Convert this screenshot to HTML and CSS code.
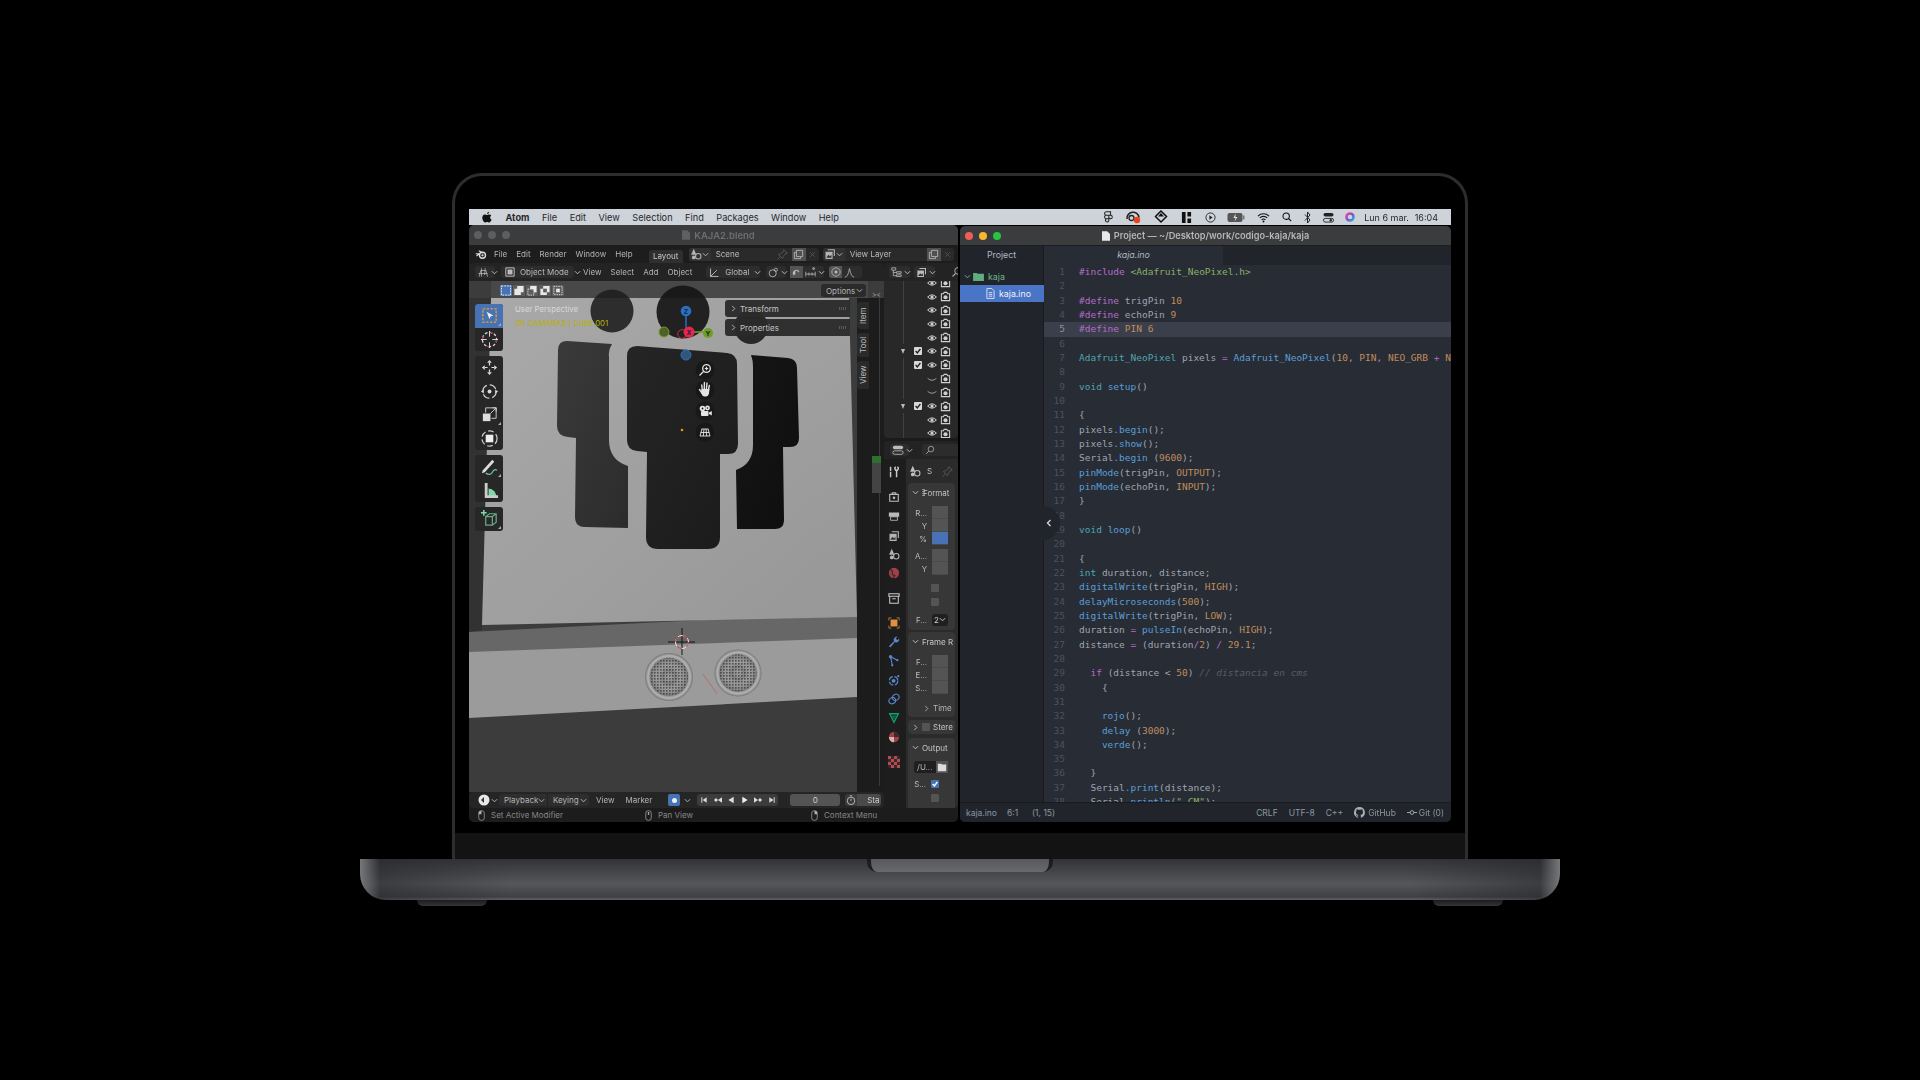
FILE: index.html
```html
<!DOCTYPE html>
<html lang="en">
<head>
  <meta charset="UTF-8" />
  <title>Atom and Blender on a MacBook Pro</title>
  <link rel="stylesheet" href="styles.css">
</head>
<body>
  <svg class="sprite" width="0" height="0">
    <symbol id="eye" viewBox="0 0 16 16"><path d="M1 8q7-7 14 0q-7 7-14 0z" fill="none" stroke="currentColor" stroke-width="1.6"/><circle cx="8" cy="8" r="2.6" fill="currentColor"/></symbol>
    <symbol id="eye-off" viewBox="0 0 16 16"><path d="M1 7q7 6 14 0" fill="none" stroke="currentColor" stroke-width="1.1"/></symbol>
    <symbol id="cam" viewBox="0 0 16 16"><path d="M2 4h3l1-2h4l1 2h3v10H2z" fill="none" stroke="currentColor" stroke-width="1.5"/><circle cx="8" cy="9" r="3" fill="currentColor"/></symbol>
    <symbol id="chev" viewBox="0 0 8 8"><path d="M1 2.5l3 3 3-3" fill="none" stroke="currentColor" stroke-width="1.1"/></symbol>
    <symbol id="right" viewBox="0 0 8 8"><path d="M2.5 1l3 3-3 3" fill="none" stroke="currentColor" stroke-width="1"/></symbol>
    <symbol id="tick" viewBox="0 0 10 10"><path d="M2 5l2.2 2.4L8 2.4" fill="none" stroke="currentColor" stroke-width="1.8"/></symbol>
    <symbol id="search" viewBox="0 0 16 16"><circle cx="9.5" cy="6.5" r="4.5" fill="none" stroke="currentColor" stroke-width="1.3"/><path d="M6 10l-4 4" stroke="currentColor" stroke-width="1.5"/></symbol>
    <symbol id="copy" viewBox="0 0 16 16"><path d="M5 2h9v9h-3v3H2V5h3zM5 5v6h6" fill="none" stroke="currentColor" stroke-width="1.3"/></symbol>
    <symbol id="close" viewBox="0 0 10 10"><path d="M1.5 1.5l7 7m0-7l-7 7" stroke="currentColor" stroke-width="1"/></symbol>
    <symbol id="scene" viewBox="0 0 16 16"><path d="M5 1L1.5 9h7z" fill="currentColor"/><circle cx="11" cy="11" r="3.6" fill="none" stroke="currentColor" stroke-width="1.4"/><circle cx="5" cy="12.5" r="2.5" fill="currentColor"/></symbol>
    <symbol id="layer" viewBox="0 0 16 16"><path d="M5 1.5h9.5v9H13V3H5zM2 5h9.500v9.500H2z" fill="currentColor"/><path d="M3 13l3-4 2 2 2-2v4z" fill="#333"/></symbol>
    <symbol id="mouse-l" viewBox="0 0 10 16"><rect x="1" y="1" width="8" height="14" rx="3.5" fill="none" stroke="currentColor"/><path d="M1 6V4.5A3.5 3.5 0 0 1 4.5 1H5v5z" fill="currentColor"/></symbol>
    <symbol id="mouse-m" viewBox="0 0 10 16"><rect x="1" y="1" width="8" height="14" rx="3.5" fill="none" stroke="currentColor"/><rect x="4" y="3" width="2" height="4" fill="currentColor"/></symbol>
    <symbol id="mouse-r" viewBox="0 0 10 16"><rect x="1" y="1" width="8" height="14" rx="3.5" fill="none" stroke="currentColor"/><path d="M9 6V4.5A3.5 3.5 0 0 0 5.5 1H5v5z" fill="currentColor"/></symbol>
  </svg>

  <div class="laptop">
    <div class="lid">
      <div class="screen">
        <div class="menubar">
          <svg class="apple" viewBox="0 0 14 16"><path d="M10 .5c.1 1.700-1.500 3.200-3 3C6.900 2 8.500.6 10 .5zM3.800 4.400c1.300 0 2.200.8 3.100.8s1.800-.9 3.300-.8c1 0 2.100.5 2.800 1.500-2.400 1.500-2 4.700.4 5.800-.6 1.700-2.100 3.900-3.500 3.900-1.100 0-1.500-.7-2.800-.7s-1.700.7-2.800.7C2.400 15.600.4 12 .4 9.200c0-3 1.600-4.800 3.400-4.800z" fill="#111"/></svg>
          <span class="menu-app">Atom</span>
          <span>File</span><span>Edit</span><span>View</span><span>Selection</span><span>Find</span><span>Packages</span><span>Window</span><span>Help</span>
          <div class="tray">
            <svg class="w10" viewBox="0 0 10 14"><path d="M3 1h5v4H3a2 2 0 0 1 0-4zM3 5h3v4H3a2 2 0 0 1 0-4zM3 9h3v2a2 2 0 1 1-3-2zM6 5h2a2 2 0 1 1-2 2z" fill="none" stroke="#222" stroke-width="1.2"/></svg>
            <svg class="w16" viewBox="0 0 16 14"><path d="M1.500 9a6 6 0 0 1 12-1.500" fill="none" stroke="#222" stroke-width="1.6"/><circle cx="6" cy="8" r="2.5" fill="none" stroke="#222" stroke-width="1.3"/><circle cx="11.500" cy="10" r="3.200" fill="#e8431f"/></svg>
            <svg class="w14" viewBox="0 0 14 14"><path d="M7 1l5.500 5.500L7 12 1.500 6.500z" fill="none" stroke="#111" stroke-width="1.5"/><path d="M7 3l3 3.500H4z" fill="#111"/></svg>
            <svg class="w12" viewBox="0 0 12 12"><path d="M1 0h4v12H1zM7 0h4v5H7zM7 7h4v5H7z" fill="#111"/></svg>
            <svg class="w11" viewBox="0 0 12 12"><circle cx="6" cy="6" r="5" fill="none" stroke="#222"/><path d="M4.800 3.500l3.500 2.500-3.500 2.500z" fill="#222"/></svg>
            <svg class="w18" viewBox="0 0 18 10"><rect x=".5" y=".5" width="15" height="9" rx="2" fill="#555"/><rect x="16" y="3" width="1.5" height="4" fill="#777"/><path d="M8.500 1L6.500 5.500h2L7.500 9l3-4.500h-2z" fill="#ddd"/></svg>
            <svg class="w12" viewBox="0 0 14 11"><path d="M1 4a8.500 8.500 0 0 1 12 0M3 6a5.500 5.500 0 0 1 8 0M5 8a2.800 2.800 0 0 1 4 0" fill="none" stroke="#111" stroke-width="1.2"/><circle cx="7" cy="9.800" r="1" fill="#111"/></svg>
            <svg class="w10" viewBox="0 0 12 12"><circle cx="5" cy="5" r="3.800" fill="none" stroke="#111" stroke-width="1.3"/><path d="M8 8l3 3" stroke="#111" stroke-width="1.5"/></svg>
            <svg class="w7" viewBox="0 0 7 13"><path d="M1 3.500l5 5.500-2.500 3V1L6 4 1 9.500" fill="none" stroke="#222"/></svg>
            <svg class="w11" viewBox="0 0 12 12"><rect x=".5" y="1" width="11" height="4" rx="2" fill="#222"/><rect x=".5" y="7" width="11" height="4" rx="2" fill="none" stroke="#222"/><circle cx="8.500" cy="9" r="1.300" fill="#222"/></svg>
            <svg class="w10" viewBox="0 0 12 12"><defs><linearGradient id="siri" x1="0" y1="0" x2="1" y2="1"><stop offset="0" stop-color="#e84a9c"/><stop offset=".5" stop-color="#7a4fd8"/><stop offset="1" stop-color="#28b6c8"/></linearGradient></defs><circle cx="6" cy="6" r="4.300" fill="none" stroke="url(#siri)" stroke-width="3"/></svg>
            <span class="clock">Lun 6 mar.</span><span>16:04</span>
          </div>
        </div>

        <div class="desktop">
          <div class="blender">
            <div class="win-title">
              <div class="lights">
                <i class="light off"></i><i class="light off"></i><i class="light off"></i>
              </div>
              <span class="blend-name"><svg class="doc" viewBox="0 0 10 12"><path d="M0 0h6.500L10 3.500V12H0z" fill="#5e6062"/></svg>KAJA2.blend</span>
            </div>
            <div class="topbar">
              <svg class="logo" viewBox="0 0 16 14"><path d="M1 6h5l-4 3M5 2l6 3" fill="none" stroke="#ddd" stroke-width="1.500"/><circle cx="10" cy="8" r="4" fill="none" stroke="#ddd" stroke-width="1.800"/><circle cx="10" cy="8" r="1.500" fill="#ddd"/></svg>
              <span>File</span><span>Edit</span><span>Render</span><span>Window</span><span>Help</span>
              <span class="tab-layout">Layout</span>
              <div class="top-field scene-field">
                <span class="ficon"><svg class="ic12"><use href="#scene"/></svg><svg class="ic6"><use href="#chev"/></svg></span>
                <span class="fname">Scene</span>
                <svg class="ic11 dim" viewBox="0 0 16 16"><path d="M10 1l5 5-3 1-3 4-1 3-6-6 3-1 4-3zM5 11l-4 4" fill="none" stroke="currentColor" stroke-width="1.200"/></svg>
                <span class="copybox"><svg class="ic11"><use href="#copy"/></svg></span>
                <svg class="ic7 dim"><use href="#close"/></svg>
              </div>
              <div class="top-field layer-field">
                <span class="ficon"><svg class="ic12"><use href="#layer"/></svg><svg class="ic6"><use href="#chev"/></svg></span>
                <span class="fname">View Layer</span>
                <span class="copybox"><svg class="ic11"><use href="#copy"/></svg></span>
                <svg class="ic7 dim"><use href="#close"/></svg>
              </div>
            </div>

            <div class="blender-main">
              <div class="blender-left">
                <div class="view-header">
                  <span class="hbtn editor-btn">
                    <svg class="ic12" viewBox="0 0 16 16"><path d="M2 10h12M6 3v11M11 3l-1 9M3 14l2-8h7l2 8" fill="none" stroke="currentColor"/></svg><svg class="ic6"><use href="#chev"/></svg>
                  </span>
                  <span class="hbtn mode-btn">
                    <svg class="ic10" viewBox="0 0 12 12"><path d="M1 1h10v10H1z" fill="none" stroke="currentColor" stroke-width="1.200"/><rect x="3" y="3" width="6" height="6" fill="currentColor"/></svg>Object Mode<svg class="ic6"><use href="#chev"/></svg>
                  </span>
                  <span class="hmenu menu-view">View</span><span class="hmenu">Select</span><span class="hmenu">Add</span><span class="hmenu">Object</span>
                  <span class="hbtn global-btn">
                    <svg class="ic11" viewBox="0 0 14 14"><path d="M2 2v10h10M2 12l8-8" fill="none" stroke="currentColor" stroke-width="1.200"/></svg>Global<svg class="ic6"><use href="#chev"/></svg>
                  </span>
                  <span class="hbtn pivot-btn">
                    <svg class="ic11" viewBox="0 0 14 14"><circle cx="6" cy="8" r="4.500" fill="none" stroke="currentColor" stroke-width="1.100"/><circle cx="10" cy="3.500" r="2" fill="none" stroke="currentColor"/></svg><svg class="ic6"><use href="#chev"/></svg>
                  </span>
                  <span class="hbtn snap-btn">
                    <svg class="ic11 magnet" viewBox="0 0 14 14"><path d="M3 12A5 5 0 1 1 11 6l-2 2A2 2 0 1 0 6 9z" fill="currentColor"/></svg>
                    <svg class="ic11" viewBox="0 0 14 14"><path d="M1 6v6M13 6v6M1 9h12M5 7v4M9 7v4M10 1h2v2h-2z" fill="none" stroke="currentColor"/></svg><svg class="ic6"><use href="#chev"/></svg>
                  </span>
                  <span class="hbtn prop-btn">
                    <span class="prop-on"><svg class="ic10" viewBox="0 0 12 12"><circle cx="6" cy="6" r="5" fill="none" stroke="currentColor"/><circle cx="6" cy="6" r="1.800" fill="currentColor"/></svg></span>
                    <svg class="ic11" viewBox="0 0 14 14"><path d="M1 13Q5 13 7 2Q9 13 13 13" fill="none" stroke="currentColor"/></svg>
                  </span>
                </div>

                <div class="viewport">
                  <svg class="scene" viewBox="469 281 415 511">
                    <defs>
                      <linearGradient id="plane" x1="0" y1="0" x2="1" y2="1"><stop offset="0" stop-color="#a9a9a9"/><stop offset="1" stop-color="#979797"/></linearGradient>
                      <linearGradient id="pieceL" x1="0" y1="0" x2="1" y2="1"><stop offset="0" stop-color="#3a3a3a"/><stop offset="1" stop-color="#2c2c2c"/></linearGradient>
                      <linearGradient id="pieceC" x1="0" y1="0" x2="1" y2="1"><stop offset="0" stop-color="#252525"/><stop offset="1" stop-color="#1b1b1b"/></linearGradient>
                      <linearGradient id="pieceR" x1="0" y1="0" x2="1" y2="1"><stop offset="0" stop-color="#161616"/><stop offset="1" stop-color="#0e0e0e"/></linearGradient>
                      <radialGradient id="ring"><stop offset=".78" stop-color="#8a8a8a"/><stop offset=".88" stop-color="#b4b4b4"/><stop offset="1" stop-color="#747474"/></radialGradient>
                      <radialGradient id="cone"><stop offset="0" stop-color="#b0b0b0" stop-opacity=".1"/><stop offset=".35" stop-color="#3a3a3a" stop-opacity=".25"/><stop offset=".6" stop-color="#9a9a9a" stop-opacity=".1"/><stop offset="1" stop-color="#333" stop-opacity=".35"/></radialGradient>
                      <pattern id="mesh" width="3" height="3" patternUnits="userSpaceOnUse"><rect width="3" height="3" fill="#9c9c9c"/><rect width="1.600" height="1.600" fill="#484848"/></pattern>
                    </defs>
                    <rect x="469" y="281" width="415" height="511" fill="#3c3c3c"/>
                    <path d="M469 298h22l-9 332-13 2z" fill="#323232"/>
                    <path d="M469 632l388-20v28l-388 15z" fill="#676767"/>
                    <path d="M491 298h358l8 319-375 8z" fill="url(#plane)"/>
                    <path d="M469 652l388-14v59l-388 21z" fill="#9b9b9b"/>
                    <path d="M857 298h27v494h-27z" fill="#1c1c1c"/>
                    <path d="M879 298h1v488h-1z" fill="#3a3a3a"/>
                    <path d="M872 456h9v7h-9z" fill="#2f6f2f"/>
                    <path d="M872 463h9v30h-9z" fill="#444"/>
                    <rect x="491" y="281" width="366" height="17" fill="#484848"/>
                    <rect x="857" y="281" width="11" height="17" fill="#484848"/>

                    <path d="M567 341L612 344Q608 350 609 357L609 440Q609 460 628 466L628 528L585 527Q575 527 575 517L576 438L568 437Q557 436 557 426L558 350Q558 341 567 341Z" fill="url(#pieceL)"/>
                    <path d="M637 346L727 353Q737 354 737 364L738 444Q738 454 728 454L720 454L720 537Q720 549 708 549L658 549Q646 549 646 537L647 452L637 451Q627 450 627 440L627 356Q627 346 637 346Z" fill="url(#pieceC)"/>
                    <path d="M751 355L788 358Q797 359 797 368L799 438Q799 447 790 447L783 447L784 520Q784 529 775 529L737 529L736 470Q753 464 753 445L753 367Q753 360 751 355Z" fill="url(#pieceR)"/>

                    <circle cx="612" cy="311" r="21.500" fill="#1d1d1d" fill-opacity=".88"/>
                    <circle cx="683" cy="312" r="26.500" fill="#161616" fill-opacity=".92"/>
                    <circle cx="751" cy="327" r="17" fill="#1d1d1d" fill-opacity=".92"/>

                    <path d="M686 311v22" stroke="#2a6fc0" stroke-width="1.500"/>
                    <path d="M689 332h19" stroke="#6f9d1f" stroke-width="1.500"/>
                    <circle cx="664" cy="332" r="5" fill="#50602a" stroke="#6f9d1f"/>
                    <circle cx="682" cy="334" r="4.300" fill="none" stroke="#c0303f"/>
                    <circle cx="686" cy="311" r="5.300" fill="#2a6fc0"/>
                    <circle cx="708" cy="333" r="5" fill="#6f9d1f"/>
                    <circle cx="689" cy="332" r="5.500" fill="#e8244f"/>
                    <circle cx="686" cy="355" r="5" fill="#33557a" stroke="#2a6fc0"/>
                    <text class="axis" x="686" y="313.500">Z</text><text class="axis" x="689" y="334.500">X</text><text class="axis" x="708" y="335.500">Y</text>

                    <g fill="#181818" fill-opacity=".95">
                      <circle cx="705" cy="370" r="9.500"/><circle cx="705" cy="390" r="9.500"/><circle cx="705" cy="411" r="9.500"/><circle cx="705" cy="432" r="9.500"/>
                    </g>
                    <g fill="none" stroke="#e4e4e4">
                      <circle cx="706.500" cy="368.500" r="3.800" stroke-width="1.300"/>
                      <path d="M703.500 371.500l-4 4M704.800 368.500h3.400M706.500 366.800v3.400" stroke-width="1.200"/>
                      <path d="M702.300 391l-.5-6M704.300 389l.1-6.500M706.400 389l.6-6M708.400 390l.9-4.500M702 393l-2.500-3.500" stroke-width="1.400" stroke-linecap="round"/>
                      <path d="M702 429l-2 7M708 429l2 7M704 429l-.7 7M706 429l.7 7M701.500 429h7M700.700 432.500h8.600M700 436h10" stroke-width=".9"/>
                    </g>
                    <path d="M701.500 389h8l-.6 5q-1 2.500-3 2.500h-1.500q-2 0-3-3z" fill="#e4e4e4"/>
                    <g fill="#e4e4e4">
                      <circle cx="702.500" cy="408.500" r="2.800"/><circle cx="707.500" cy="408" r="2.400"/>
                      <rect x="701" y="411" width="7.500" height="5" rx="1"/>
                      <path d="M709 412.500l2.800-1.500v4.500l-2.800-1.500z"/>
                    </g>
                    <circle cx="702.500" cy="408.500" r=".9" fill="#181818"/><circle cx="707.500" cy="408" r=".8" fill="#181818"/>
                    <circle cx="682" cy="430" r="1.300" fill="#f09020"/>

                    <circle cx="669" cy="677" r="24" fill="url(#ring)"/><circle cx="669" cy="677" r="19" fill="url(#mesh)"/><circle cx="669" cy="677" r="19" fill="url(#cone)"/>
                    <circle cx="738" cy="673" r="23.500" fill="url(#ring)"/><circle cx="738" cy="673" r="18.500" fill="url(#mesh)"/><circle cx="738" cy="673" r="18.500" fill="url(#cone)"/>
                    <path d="M703 674l14 20" stroke="#bb6a6a"/>
                    <path d="M682 628v27M668 642h27" stroke="#151515"/>
                    <circle cx="682" cy="642" r="6.500" fill="none" stroke="#eee"/>
                    <circle cx="682" cy="642" r="6.500" fill="none" stroke="#d02020" stroke-dasharray="5.100 5.100"/>
                  </svg>

                  <div class="select-modes">
                    <span class="sel-mode on"><svg viewBox="0 0 12 12"><rect x="1" y="1" width="10" height="10" fill="none" stroke="#f0f0f0" stroke-dasharray="2 1"/></svg></span>
                    <span class="sel-mode"><svg viewBox="0 0 12 12"><path d="M4 1h7v7H8v3H1V4h3z" fill="#e8e8e8"/></svg></span>
                    <span class="sel-mode"><svg viewBox="0 0 12 12"><path d="M4 1h7v7H4z" fill="#e8e8e8"/><rect x="1.500" y="4.500" width="6.500" height="6.500" fill="#5c5c5c" stroke="#e8e8e8" stroke-dasharray="1.500 1"/></svg></span>
                    <span class="sel-mode"><svg viewBox="0 0 12 12"><path d="M4 1h7v7H8V4H4zM1 4h7v7H1z" fill="#e8e8e8"/><rect x="4" y="4" width="4" height="4" fill="#5c5c5c"/></svg></span>
                    <span class="sel-mode"><svg viewBox="0 0 12 12"><rect x="1.500" y="1.500" width="9" height="9" fill="none" stroke="#ddd" stroke-dasharray="1.500 1"/><rect x="4" y="4" width="4" height="4" fill="#e8e8e8"/></svg></span>
                  </div>
                  <span class="options-btn">Options<svg class="ic6"><use href="#chev"/></svg></span>

                  <div class="view-label">
                    <span>User Perspective</span>
                    <span class="view-object">(0) CAMARAS | Cube.001</span>
                  </div>

                  <div class="tool-shelf">
                    <div class="tool-group">
                      <span class="tool active"><svg viewBox="0 0 20 20"><rect x="3" y="3" width="14" height="14" fill="none" stroke="#e0a040" stroke-width="1.400" stroke-dasharray="2.500 1.500"/><path d="M7 6l7 4-3 1-1 3z" fill="#eee"/></svg></span>
                      <span class="tool"><svg viewBox="0 0 20 20"><circle cx="10" cy="10" r="7.500" fill="none" stroke="#d8d8d8" stroke-width="1.300" stroke-dasharray="3 2"/><circle cx="10" cy="10" r="7.500" fill="none" stroke="#c03040" stroke-width="1.300" stroke-dasharray="3 9"/><path d="M10 1v6M10 13v6M1 10h6M13 10h6" stroke="#ddd"/></svg></span>
                    </div>
                    <div class="tool-group">
                      <span class="tool"><svg viewBox="0 0 20 20"><path d="M10 2l2.500 3h-5zM10 18l2.500-3h-5zM2 10l3-2.500v5zM18 10l-3-2.500v5z" fill="#ddd"/><path d="M10 5v3M10 12v3M5 10h3M12 10h3" stroke="#ddd" stroke-width="1.300"/></svg></span>
                      <span class="tool"><svg viewBox="0 0 20 20"><circle cx="10" cy="10" r="7" fill="none" stroke="#ccc" stroke-width="1.300" stroke-dasharray="8 3"/><circle cx="10" cy="10" r="2" fill="#ddd"/><path d="M1 10l3-2v4zM19 10l-3-2v4z" fill="#ddd"/></svg></span>
                      <span class="tool tool-corner"><svg viewBox="0 0 20 20"><rect x="3" y="9" width="8" height="8" fill="#ddd"/><path d="M6 8V3h11v11h-5M11 9l6-6M13 3h4v4" fill="none" stroke="#ccc"/></svg></span>
                      <span class="tool"><svg viewBox="0 0 20 20"><circle cx="10" cy="10" r="8" fill="none" stroke="#ccc" stroke-width="1.300" stroke-dasharray="6 3"/><rect x="6" y="6" width="8" height="8" fill="#eee"/></svg></span>
                    </div>
                    <div class="tool-group">
                      <span class="tool tool-corner"><svg viewBox="0 0 20 20"><path d="M3 14L13 3l2 2L5 16l-3 1z" fill="#ddd"/><path d="M6 17q5 3 7-1t5-2" fill="none" stroke="#68c098" stroke-width="1.300"/></svg></span>
                      <span class="tool"><svg viewBox="0 0 20 20"><path d="M9 17V8a8 8 0 0 1 8 9z" fill="#7fd8a8"/><path d="M5 2h3v13h11v3H5z" fill="#ccc"/></svg></span>
                    </div>
                    <div class="tool-group">
                      <span class="tool tool-corner"><svg viewBox="0 0 20 20"><path d="M6 8l4-3h7v9l-4 3H6zM6 8h7v9M13 8l4-3" fill="none" stroke="#68a888" stroke-width="1.300"/><path d="M1 4h6M4 1v6" stroke="#7fd8a8" stroke-width="1.600"/></svg></span>
                    </div>
                  </div>

                  <div class="n-panel panel-transform"><svg class="ic6"><use href="#right"/></svg>Transform<i class="grip"></i></div>
                  <div class="n-panel panel-properties"><svg class="ic6"><use href="#right"/></svg>Properties<i class="grip"></i></div>

                  <span class="n-tab tab-item">Item</span>
                  <span class="n-tab tab-tool">Tool</span>
                  <span class="n-tab tab-view">View</span>
                  <span class="split-arrows">&gt;&lt;</span>
                </div>

                <div class="timeline">
                  <span class="tl-editor"><svg class="ic12" viewBox="0 0 12 12"><circle cx="6" cy="6" r="5.500" fill="#e8e8e8"/><path d="M6 3L3 6l3 3z" fill="#333"/></svg><svg class="ic6"><use href="#chev"/></svg></span>
                  <span class="tl-btn tl-play">Playback<svg class="ic6"><use href="#chev"/></svg></span>
                  <span class="tl-btn tl-key">Keying<svg class="ic6"><use href="#chev"/></svg></span>
                  <span class="tl-menu">View</span>
                  <span class="tl-menu">Marker</span>
                  <span class="tl-record"><i></i></span>
                  <svg class="ic6 tl-recchev"><use href="#chev"/></svg>
                  <div class="tl-transport">
                    <svg viewBox="0 0 12 12"><path d="M2 2h1.500v8H2zM10 2v8L4 6z" fill="#ddd"/></svg>
                    <svg viewBox="0 0 12 12"><path d="M0 6l3-3 3 3-3 3zM6 6l6-4v8z" fill="#ddd"/></svg>
                    <svg viewBox="0 0 12 12"><path d="M10 1v10L2 6z" fill="#ddd"/></svg>
                    <svg viewBox="0 0 12 12"><path d="M2 1v10l8-5z" fill="#eee"/></svg>
                    <svg viewBox="0 0 12 12"><path d="M12 6L9 3 6 6l3 3zM6 6L0 2v8z" fill="#ddd"/></svg>
                    <svg viewBox="0 0 12 12"><path d="M10 2H8.500v8H10zM2 2v8l6-4z" fill="#ddd"/></svg>
                  </div>
                  <span class="tl-frame">0</span>
                  <span class="tl-timer"><svg class="ic10" viewBox="0 0 12 12"><circle cx="6" cy="7" r="4.500" fill="none" stroke="#ccc"/><path d="M6 7V4.500M4.500 1h3" stroke="#ccc"/></svg></span>
                  <span class="tl-start">Sta</span>
                </div>
              </div>

              <div class="blender-right">
                <div class="outliner">
                  <div class="out-header">
                    <span class="hbtn"><svg class="ic11" viewBox="0 0 14 14"><path d="M1 1h5v3H1zM7 6h6v2H7zM7 10h6v2H7zM3 4v7h4M3 7h4" fill="none" stroke="currentColor"/></svg><svg class="ic6"><use href="#chev"/></svg></span>
                    <span class="hbtn"><svg class="ic11"><use href="#layer"/></svg><svg class="ic6"><use href="#chev"/></svg></span>
                    <svg class="ic12 out-search"><use href="#search"/></svg>
                  </div>
                  <div class="out-rows">
                    <div class="orow stem"><svg><use href="#eye"/></svg><svg><use href="#cam"/></svg></div>
                    <div class="orow stem"><svg><use href="#eye"/></svg><svg><use href="#cam"/></svg></div>
                    <div class="orow stem"><svg><use href="#eye"/></svg><svg><use href="#cam"/></svg></div>
                    <div class="orow stem"><svg><use href="#eye"/></svg><svg><use href="#cam"/></svg></div>
                    <div class="orow stem"><svg><use href="#eye"/></svg><svg><use href="#cam"/></svg></div>
                    <div class="orow"><b class="tri"></b><i class="check"><svg><use href="#tick"/></svg></i><svg><use href="#eye"/></svg><svg><use href="#cam"/></svg></div>
                    <div class="orow stem"><i class="check"><svg><use href="#tick"/></svg></i><svg><use href="#eye"/></svg><svg><use href="#cam"/></svg></div>
                    <div class="orow stem"><svg><use href="#eye-off"/></svg><svg><use href="#cam"/></svg></div>
                    <div class="orow stem"><svg><use href="#eye-off"/></svg><svg><use href="#cam"/></svg></div>
                    <div class="orow"><b class="tri"></b><i class="check"><svg><use href="#tick"/></svg></i><svg><use href="#eye"/></svg><svg><use href="#cam"/></svg></div>
                    <div class="orow stem"><svg><use href="#eye"/></svg><svg><use href="#cam"/></svg></div>
                    <div class="orow stem"><svg><use href="#eye"/></svg><svg><use href="#cam"/></svg></div>
                  </div>
                </div>

                <div class="properties">
                  <div class="prop-header">
                    <span class="hbtn"><svg class="ic12" viewBox="0 0 14 14"><rect x="1" y="2" width="12" height="4" rx="2" fill="currentColor"/><rect x="1" y="8" width="12" height="4" rx="2" fill="none" stroke="currentColor"/></svg><svg class="ic6"><use href="#chev"/></svg></span>
                    <span class="prop-search"><svg class="ic10"><use href="#search"/></svg></span>
                  </div>
                  <div class="prop-body">
                    <div class="prop-tabs">
                      <svg class="g-tool" viewBox="0 0 14 14"><path d="M3 1v5M3 7v6M9 1q-2 2 0 4h2q2-2 0-4M10 5v8" fill="none" stroke="#ccc" stroke-width="1.700"/></svg>
                      <svg class="g-render" viewBox="0 0 14 14"><path d="M2 4h10v8H2zM5 4V2h4v2" fill="none" stroke="#bbb" stroke-width="1.300"/><circle cx="7" cy="8" r="1.500" fill="#bbb"/></svg>
                      <svg class="g-output" viewBox="0 0 14 14"><path d="M1 3h12v5H1z" fill="#bbb"/><path d="M3 8h8v4H3z" fill="none" stroke="#bbb"/></svg>
                      <svg class="g-layer"><use href="#layer"/></svg>
                      <svg class="g-scene"><use href="#scene"/></svg>
                      <svg class="g-world" viewBox="0 0 14 14"><circle cx="7" cy="7" r="6" fill="#a04048"/><path d="M3 3q3 2 2 4t3 3l-2 3" fill="none" stroke="#3a2a2a" stroke-width="1.400"/></svg>
                      <svg class="g-coll" viewBox="0 0 14 14"><path d="M1 2h12v3H1zM2 5h10v8H2zM5 8h4" fill="none" stroke="#ccc" stroke-width="1.200"/></svg>
                      <svg class="g-obj" viewBox="0 0 14 14"><path d="M1 4V1h3M10 1h3v3M13 10v3h-3M4 13H1v-3" fill="none" stroke="#c08040"/><rect x="3" y="3" width="8" height="8" fill="#e09040"/></svg>
                      <svg class="g-mod" viewBox="0 0 14 14"><path d="M1 12l6-6a3.500 3.500 0 0 1 4-5l-2 2 2 2 2-2a3.500 3.500 0 0 1-5 4l-5 6z" fill="#5a86d0"/></svg>
                      <svg class="g-part" viewBox="0 0 14 14"><path d="M3 2l8 4M3 2l2 10" stroke="#5a86d0" stroke-width="1.300"/><circle cx="3" cy="2" r="2" fill="#5a86d0"/><circle cx="11" cy="6" r="1.300" fill="#5a86d0"/><circle cx="5" cy="12" r="1.300" fill="#5a86d0"/></svg>
                      <svg class="g-phys" viewBox="0 0 14 14"><circle cx="6.500" cy="8" r="5" fill="none" stroke="#5a86d0" stroke-width="1.300" stroke-dasharray="6 2"/><circle cx="6.500" cy="8" r="2.200" fill="#5a86d0"/><circle cx="12" cy="2.500" r="1.300" fill="#5a86d0"/></svg>
                      <svg class="g-cons" viewBox="0 0 14 14"><ellipse cx="5" cy="9" rx="4" ry="3.500" fill="none" stroke="#5a86d0" stroke-width="1.300" transform="rotate(-30 5 9)"/><ellipse cx="9" cy="5" rx="4" ry="3.500" fill="none" stroke="#5a86d0" stroke-width="1.300" transform="rotate(-30 9 5)"/></svg>
                      <svg class="g-data" viewBox="0 0 14 14"><path d="M2 2h10L7 12z" fill="none" stroke="#10a070" stroke-width="1.600"/><path d="M4 4h6l-3 5z" fill="#0c6a4c"/></svg>
                      <svg class="g-mat" viewBox="0 0 14 14"><circle cx="7" cy="7" r="6" fill="#a04048"/><path d="M7 1a6 6 0 0 1 6 6H7z" fill="#3a2a2a"/><path d="M1 7h6v6a6 6 0 0 1-6-6z" fill="#d8b0b0"/></svg>
                      <svg class="g-tex" viewBox="0 0 12 12"><rect width="12" height="12" fill="#33282a"/><path d="M0 0h3v3H0zM6 0h3v3H6zM3 3h3v3H3zM9 3h3v3H9zM0 6h3v3H0zM6 6h3v3H6zM3 9h3v3H3zM9 9h3v3H9z" fill="#b84a52"/></svg>
                    </div>
                    <div class="prop-content">
                      <div class="prop-context">
                        <svg class="ic12"><use href="#scene"/></svg><span>S</span>
                        <svg class="ic11 dim" viewBox="0 0 16 16"><path d="M10 1l5 5-3 1-3 4-1 3-6-6 3-1 4-3zM5 11l-4 4" fill="none" stroke="currentColor" stroke-width="1.200"/></svg>
                      </div>

                      <section class="panel panel-format">
                        <div class="panel-head"><svg class="ic6"><use href="#chev"/></svg><i class="grip-v"></i>Format</div>
                        <div class="frow"><label>R...</label><i class="field"></i></div>
                        <div class="frow"><label>Y</label><i class="field"></i></div>
                        <div class="frow"><label>%</label><i class="field blue"></i></div>
                        <div class="frow spaced"><label>A...</label><i class="field"></i></div>
                        <div class="frow"><label>Y</label><i class="field"></i></div>
                        <div class="crow spaced-more"><i class="cbox"></i></div>
                        <div class="crow"><i class="cbox"></i></div>
                        <div class="frow spaced"><label>F...</label><span class="field dark">2<svg class="ic6"><use href="#chev"/></svg></span></div>
                      </section>

                      <section class="panel panel-frame">
                        <div class="panel-head"><svg class="ic6"><use href="#chev"/></svg>Frame R</div>
                        <div class="frow"><label>F...</label><i class="field"></i></div>
                        <div class="frow"><label>E...</label><i class="field"></i></div>
                        <div class="frow"><label>S...</label><i class="field"></i></div>
                        <div class="subhead"><svg class="ic6"><use href="#right"/></svg>Time</div>
                      </section>

                      <section class="panel panel-stereo">
                        <div class="panel-head"><svg class="ic6"><use href="#right"/></svg><i class="cbox"></i>Stere</div>
                      </section>

                      <section class="panel panel-output">
                        <div class="panel-head"><svg class="ic6"><use href="#chev"/></svg>Output</div>
                        <div class="path-row"><span class="path-field">/U...</span><span class="path-btn"><svg class="ic10" viewBox="0 0 12 12"><path d="M1 2h4l1 1h5v8H1z" fill="#ddd"/></svg></span></div>
                        <div class="crow labelled"><label>S...</label><i class="cbox on"><svg><use href="#tick"/></svg></i></div>
                        <div class="crow"><i class="cbox"></i></div>
                      </section>
                    </div>
                  </div>
                </div>
              </div>
            </div>

            <div class="statusbar">
              <span class="st st-a"><svg><use href="#mouse-l"/></svg>Set Active Modifier</span>
              <span class="st st-b"><svg><use href="#mouse-m"/></svg>Pan View</span>
              <span class="st st-c"><svg><use href="#mouse-r"/></svg>Context Menu</span>
            </div>
          </div>

          <div class="atom">
            <div class="win-title atom-title">
              <div class="lights">
                <i class="light red"></i><i class="light yellow"></i><i class="light green"></i>
              </div>
              <span class="atom-name"><svg class="doc" viewBox="0 0 10 12"><path d="M0 0h6.500L10 3.500V12H0z" fill="#e8e8e8"/></svg>Project — ~/Desktop/work/codigo-kaja/kaja</span>
            </div>
            <div class="atom-main">
              <aside class="tree">
                <div class="tree-tab">Project</div>
                <div class="tree-row tree-dir">
                  <svg class="ic6"><use href="#chev"/></svg>
                  <svg class="folder" viewBox="0 0 12 10"><path d="M0 1h4l1 1h7v8H0z" fill="#5fae7e"/></svg>kaja
                </div>
                <div class="tree-row tree-file">
                  <svg class="fileic" viewBox="0 0 10 12"><path d="M1 .5h5.500L9 3v8.500H1zM3 5h4M3 7h4M3 9h4" fill="none" stroke="#dfe6f5"/></svg>kaja.ino
                </div>
              </aside>
              <span class="tree-handle"><svg viewBox="0 0 8 10"><path d="M5.500 2L2.500 5l3 3" fill="none" stroke="#cfd4dc" stroke-width="1.400"/></svg></span>
              <main class="editor">
                <div class="tabs"><span class="tab">kaja.ino</span></div>
                <div class="code">
<div class="line"><span class="ln">1</span><span class="src"><b class="k">#include</b> <b class="s">&lt;Adafruit_NeoPixel.h&gt;</b></span></div>
<div class="line"><span class="ln">2</span><span class="src"></span></div>
<div class="line"><span class="ln">3</span><span class="src"><b class="k">#define</b> trigPin <b class="n">10</b></span></div>
<div class="line"><span class="ln">4</span><span class="src"><b class="k">#define</b> echoPin <b class="n">9</b></span></div>
<div class="line cur"><span class="ln">5</span><span class="src"><b class="k">#define</b> <b class="n">PIN 6</b></span></div>
<div class="line"><span class="ln">6</span><span class="src"></span></div>
<div class="line"><span class="ln">7</span><span class="src"><b class="t">Adafruit_NeoPixel</b> pixels <b class="k">=</b> <b class="f">Adafruit_NeoPixel</b>(<b class="n">10</b>, <b class="n">PIN</b>, <b class="n">NEO_GRB</b> <b class="k">+</b> <b class="n">NEO_KHZ800</b>);</span></div>
<div class="line"><span class="ln">8</span><span class="src"></span></div>
<div class="line"><span class="ln">9</span><span class="src"><b class="t">void</b> <b class="f">setup</b>()</span></div>
<div class="line"><span class="ln">10</span><span class="src"></span></div>
<div class="line"><span class="ln">11</span><span class="src">{</span></div>
<div class="line"><span class="ln">12</span><span class="src">pixels<b class="f">.begin</b>();</span></div>
<div class="line"><span class="ln">13</span><span class="src">pixels<b class="f">.show</b>();</span></div>
<div class="line"><span class="ln">14</span><span class="src">Serial<b class="f">.begin</b> (<b class="n">9600</b>);</span></div>
<div class="line"><span class="ln">15</span><span class="src"><b class="f">pinMode</b>(trigPin, <b class="n">OUTPUT</b>);</span></div>
<div class="line"><span class="ln">16</span><span class="src"><b class="f">pinMode</b>(echoPin, <b class="n">INPUT</b>);</span></div>
<div class="line"><span class="ln">17</span><span class="src">}</span></div>
<div class="line"><span class="ln">18</span><span class="src"></span></div>
<div class="line"><span class="ln">19</span><span class="src"><b class="t">void</b> <b class="f">loop</b>()</span></div>
<div class="line"><span class="ln">20</span><span class="src"></span></div>
<div class="line"><span class="ln">21</span><span class="src">{</span></div>
<div class="line"><span class="ln">22</span><span class="src"><b class="t">int</b> duration, distance;</span></div>
<div class="line"><span class="ln">23</span><span class="src"><b class="f">digitalWrite</b>(trigPin, <b class="n">HIGH</b>);</span></div>
<div class="line"><span class="ln">24</span><span class="src"><b class="f">delayMicroseconds</b>(<b class="n">500</b>);</span></div>
<div class="line"><span class="ln">25</span><span class="src"><b class="f">digitalWrite</b>(trigPin, <b class="n">LOW</b>);</span></div>
<div class="line"><span class="ln">26</span><span class="src">duration <b class="k">=</b> <b class="f">pulseIn</b>(echoPin, <b class="n">HIGH</b>);</span></div>
<div class="line"><span class="ln">27</span><span class="src">distance <b class="k">=</b> (duration<b class="k">/</b><b class="n">2</b>) <b class="k">/</b> <b class="n">29.1</b>;</span></div>
<div class="line"><span class="ln">28</span><span class="src"></span></div>
<div class="line"><span class="ln">29</span><span class="src">  <b class="k">if</b> (distance &lt; <b class="n">50</b>) <b class="c">// distancia en cms</b></span></div>
<div class="line"><span class="ln">30</span><span class="src">    {</span></div>
<div class="line"><span class="ln">31</span><span class="src"></span></div>
<div class="line"><span class="ln">32</span><span class="src">    <b class="f">rojo</b>();</span></div>
<div class="line"><span class="ln">33</span><span class="src">    <b class="f">delay</b> (<b class="n">3000</b>);</span></div>
<div class="line"><span class="ln">34</span><span class="src">    <b class="f">verde</b>();</span></div>
<div class="line"><span class="ln">35</span><span class="src"></span></div>
<div class="line"><span class="ln">36</span><span class="src">  }</span></div>
<div class="line"><span class="ln">37</span><span class="src">  Serial<b class="f">.print</b>(distance);</span></div>
<div class="line"><span class="ln">38</span><span class="src">  Serial<b class="f">.println</b>(<b class="s">" CM"</b>);</span></div>
                </div>
              </main>
            </div>
            <footer class="atom-status">
              <span class="as-file">kaja.ino</span><span class="as-pos">6:1</span><span>(1, 15)</span>
              <div class="as-right">
                <span>CRLF</span><span>UTF-8</span><span>C++</span>
                <span class="as-icon"><svg viewBox="0 0 16 16"><path d="M8 0a8 8 0 0 0-2.500 15.600c.4.100.5-.2.500-.4v-1.400c-2.200.5-2.700-1-2.700-1-.4-.9-.9-1.200-.9-1.200-.7-.5.100-.5.100-.5.800.100 1.200.8 1.200.8.700 1.200 1.900.9 2.300.7.100-.5.300-.9.500-1.100-1.800-.2-3.600-.9-3.600-4 0-.9.300-1.600.8-2.100-.1-.2-.4-1 .1-2.100 0 0 .7-.2 2.200.8a7.500 7.500 0 0 1 4 0c1.500-1 2.200-.8 2.200-.8.400 1.100.2 1.900.1 2.100.5.600.8 1.300.8 2.100 0 3.100-1.900 3.700-3.700 3.900.3.300.6.800.6 1.500v2.200c0 .2.100.5.600.4A8 8 0 0 0 8 0z" fill="#a8aeb8"/></svg>GitHub</span>
                <span class="as-icon as-git"><svg viewBox="0 0 16 10"><circle cx="8" cy="5" r="3" fill="none" stroke="#a8aeb8" stroke-width="1.500"/><path d="M0 5h5M11 5h5" stroke="#a8aeb8" stroke-width="1.500"/></svg>Git (0)</span>
              </div>
            </footer>
          </div>
        </div>
      </div>
      <div class="chin"></div>
    </div>

    <div class="base">
      <div class="notch"></div>
    </div>
    <div class="feet"><i></i><i></i></div>
  </div>
</body>
</html>
```

FILE: styles.css
```css
* {
  box-sizing: border-box;
}

html, body {
  margin: 0;
  height: 100%;
}

body {
  background: #000;
  display: flex;
  flex-direction: column;
  align-items: center;
  padding-top: 173px;
  overflow: hidden;
  font-family: 'Inter', 'Liberation Sans', sans-serif;
}

.sprite {
  position: absolute;
}

i, b {
  font-style: normal;
  font-weight: normal;
}

.ic6 { width: 7px; height: 7px; flex: none; }
.ic7 { width: 7px; height: 7px; flex: none; }
.ic10 { width: 10px; height: 10px; flex: none; }
.ic11 { width: 11px; height: 11px; flex: none; }
.ic12 { width: 12px; height: 12px; flex: none; }
.dim { color: #5e5e5e; }

/* laptop shell */
.laptop {
  width: 1200px;
  display: flex;
  flex-direction: column;
  align-items: center;
}

.lid {
  width: 1016px;
  height: 686px;
  border: 3px solid #2d2d2f;
  border-bottom: 0;
  border-radius: 30px 30px 0 0;
  padding-top: 33px;
  background: #000;
  display: flex;
  flex-direction: column;
  overflow: hidden;
}

.screen {
  margin: 0 14px;
  width: 982px;
  height: 624px;
  padding-bottom: 11px;
  display: flex;
  flex-direction: column;
  filter: blur(0.35px);
}

.chin {
  height: 26px;
  background: #131314;
}

.base {
  width: 1200px;
  height: 41px;
  border-radius: 0 0 26px 26px;
  background:
    linear-gradient(90deg, #77787b 0, rgba(40, 40, 44, 0.55) 20px, rgba(40, 40, 44, 0.45) 42px, rgba(40, 40, 44, 0) 150px, rgba(40, 40, 44, 0) 1050px, rgba(40, 40, 44, 0.45) 1158px, rgba(40, 40, 44, 0.55) 1180px, #77787b 100%),
    linear-gradient(180deg, #333437 0, #434447 30%, #56575b 60%, #3f4044 92%, #626366 100%);
  display: flex;
  justify-content: center;
}

.notch {
  width: 186px;
  height: 13px;
  border-radius: 0 0 10px 10px;
  background: linear-gradient(180deg, #58595d, #68696d);
  border-left: 4px solid #1d1d1f;
  border-right: 4px solid #1d1d1f;
}

.feet {
  width: 1200px;
  padding: 0 57px;
  display: flex;
  justify-content: space-between;
}

.feet i {
  width: 70px;
  height: 6px;
  background: linear-gradient(180deg, #1c1c1d, #343436);
  border-radius: 0 0 8px 8px;
}

/* mac menu bar */
.menubar {
  height: 16px;
  flex: none;
  background: #ced3d9;
  color: #26282b;
  font-size: 9.2px;
  display: flex;
  align-items: center;
  padding-left: 13px;
  gap: 12.5px;
}

.apple {
  width: 10px;
  height: 12px;
  margin-right: 1px;
}

.menu-app {
  font-weight: 700;
}

.tray {
  margin-left: auto;
  padding-right: 13px;
  display: flex;
  align-items: center;
  gap: 11.8px;
  font-size: 9px;
}

.tray .clock {
  margin-left: -3px;
  margin-right: -6px;
}

.w7 { width: 7px; height: 13px; }
.w10 { width: 10px; height: 12px; }
.w11 { width: 11px; height: 11px; }
.w12 { width: 13px; height: 11px; }
.w14 { width: 14px; height: 14px; }
.w16 { width: 17px; height: 14px; }
.w18 { width: 18px; height: 11px; }

.desktop {
  height: 597px;
  flex: none;
  display: flex;
  gap: 2px;
}

/* title bars */
.win-title {
  height: 20px;
  flex: none;
  background: #3a3c3e;
  display: flex;
  align-items: center;
  justify-content: center;
  position: relative;
  border-radius: 5px 5px 0 0;
}

.lights {
  position: absolute;
  left: 5px;
  top: 6px;
  display: flex;
  gap: 6px;
}

.light {
  width: 8px;
  height: 8px;
  border-radius: 50%;
}

.light.off { background: #5c5e60; }
.light.red { background: #ec5f57; }
.light.yellow { background: #f5b82e; }
.light.green { background: #29c53f; }

.blend-name {
  display: flex;
  align-items: center;
  gap: 4px;
  font-size: 9.5px;
  font-weight: 600;
  color: #6c6e70;
  margin-left: 10px;
}

/* blender */
.blender {
  width: 489px;
  display: flex;
  flex-direction: column;
  background: #1b1b1b;
  border-radius: 5px;
  overflow: hidden;
  color: #b4b4b4;
  font-size: 8px;
  white-space: nowrap;
}

.topbar {
  height: 18px;
  flex: none;
  display: flex;
  align-items: center;
  background: #1d1d1d;
  padding-left: 6px;
  gap: 9px;
}

.logo {
  width: 12px;
  height: 11px;
  margin-right: -2px;
}

.tab-layout {
  background: #2f2f2f;
  height: 13px;
  margin: 5px 0 0 7px;
  width: 34px;
  text-align: center;
  line-height: 13px;
  border-radius: 3px 3px 0 0;
  color: #c8c8c8;
}

.top-field {
  height: 13px;
  border-radius: 3px;
  background: #2a2a2a;
  display: flex;
  align-items: center;
  margin-left: -3px;
}

.scene-field { width: 130px; }
.layer-field { width: 131px; margin-left: -5px; }

.ficon {
  width: 22px;
  height: 13px;
  display: flex;
  align-items: center;
  justify-content: center;
  background: #323232;
  border-radius: 3px 0 0 3px;
}

.fname {
  flex: 1;
  padding-left: 5px;
  color: #bcbcbc;
}

.copybox {
  width: 14px;
  height: 13px;
  background: #505050;
  display: flex;
  align-items: center;
  justify-content: center;
  margin: 0 3px 0 4px;
}

.top-field .ic7 { margin-right: 3px; }

.blender-main {
  flex: 1;
  display: flex;
  min-height: 0;
}

.blender-left {
  width: 415px;
  display: flex;
  flex-direction: column;
}

.view-header {
  height: 18px;
  flex: none;
  background: #232323;
  display: flex;
  align-items: center;
  padding-left: 6px;
  border-radius: 4px 4px 0 0;
}

.hbtn {
  height: 12px;
  background: #2d2d2d;
  border-radius: 3px;
  display: inline-flex;
  align-items: center;
  padding: 0 2px;
  gap: 2px;
  color: #bbb;
}

.editor-btn { width: 20px; margin-right: 6px; }
.mode-btn { width: 73px; gap: 5px; padding-left: 4px; }
.mode-btn .ic6 { margin-left: auto; }
.global-btn { width: 54px; gap: 5px; padding-left: 3px; margin-left: 14px; }
.global-btn .ic6 { margin-left: auto; }
.pivot-btn { width: 20px; margin-left: 6px; }
.snap-btn { width: 34px; margin-left: 4px; padding: 0 2px 0 0; }
.prop-btn { width: 33px; margin-left: 5px; padding: 0; }

.magnet {
  background: #545454;
  width: 13px;
  height: 12px;
  padding: 1px;
}

.prop-on {
  background: #545454;
  width: 13px;
  height: 12px;
  display: flex;
  align-items: center;
  justify-content: center;
  border-radius: 3px 0 0 3px;
}

.hmenu {
  margin-left: 9px;
}

.viewport {
  height: 511px;
  flex: none;
  position: relative;
  overflow: hidden;
}

.scene {
  display: block;
  width: 415px;
  height: 511px;
}

.axis {
  font: 700 6.5px 'Inter', sans-serif;
  fill: #10263c;
  text-anchor: middle;
}

.select-modes {
  position: absolute;
  left: 31px;
  top: 4px;
  display: flex;
  gap: 1px;
}

.sel-mode {
  width: 12px;
  height: 11px;
  background: #5c5c5c;
  display: flex;
}

.sel-mode svg {
  width: 12px;
  height: 11px;
}

.sel-mode.on {
  background: #4772b3;
}

.options-btn {
  position: absolute;
  left: 352px;
  top: 3px;
  width: 45px;
  height: 13px;
  background: #2b2b2b;
  border-radius: 3px;
  display: flex;
  align-items: center;
  justify-content: space-between;
  padding: 0 3px 0 5px;
}

.view-label {
  position: absolute;
  left: 46px;
  top: 23px;
  display: flex;
  flex-direction: column;
  gap: 4px;
  color: #d8d8d8;
  font-size: 7.8px;
}

.view-object {
  color: #b9b100;
}

.tool-shelf {
  position: absolute;
  left: 6px;
  top: 23px;
  width: 28px;
  display: flex;
  flex-direction: column;
  gap: 5px;
}

.tool-group {
  background: #272727;
  border-radius: 3px;
  overflow: hidden;
}

.tool {
  display: flex;
  align-items: center;
  justify-content: center;
  height: 23.5px;
  position: relative;
}

.tool svg {
  width: 19px;
  height: 19px;
}

.tool.active {
  background: #4772b3;
}

.tool-corner::after,
.tool.active::after {
  content: "";
  position: absolute;
  right: 2px;
  bottom: 2px;
  border-right: 3px solid #aaa;
  border-top: 3px solid transparent;
}

.n-panel {
  position: absolute;
  left: 256px;
  width: 125px;
  height: 17px;
  background: rgba(42, 42, 42, 0.95);
  border-radius: 3px 0 0 3px;
  display: flex;
  align-items: center;
  gap: 3px;
  padding-left: 5px;
  color: #c4c4c4;
}

.panel-transform { top: 19px; }
.panel-properties { top: 38px; }

.grip {
  margin-left: auto;
  margin-right: 3px;
  width: 8px;
  height: 3px;
  background: repeating-linear-gradient(90deg, #5a5a5a 0 1px, transparent 1px 2px);
}

.n-tab {
  position: absolute;
  left: 388px;
  width: 12px;
  background: #2a2a2a;
  border-radius: 0 3px 3px 0;
  writing-mode: vertical-rl;
  transform: rotate(180deg);
  display: flex;
  align-items: center;
  justify-content: center;
  font-size: 8px;
  color: #bbb;
}

.tab-item { top: 21px; height: 27px; }
.tab-tool { top: 52px; height: 24px; }
.tab-view { top: 80px; height: 28px; }

.split-arrows {
  position: absolute;
  left: 403px;
  top: 9px;
  font-size: 7px;
  letter-spacing: -0.5px;
  color: #aaa;
}

.timeline {
  height: 16px;
  flex: none;
  background: #252525;
  display: flex;
  align-items: center;
  padding-left: 9px;
  font-size: 8px;
  border-radius: 4px;
}

.tl-editor {
  width: 20px;
  display: flex;
  align-items: center;
  gap: 1px;
}

.tl-btn {
  height: 12px;
  background: #2e2e2e;
  display: flex;
  align-items: center;
  justify-content: space-between;
  padding: 0 2px 0 5px;
}

.tl-play { width: 48px; margin-left: 1px; border-radius: 3px 0 0 3px; }
.tl-key { width: 42px; border-radius: 0 3px 3px 0; border-left: 1px solid #222; }

.tl-menu { margin-left: 7px; margin-right: 4px; }

.tl-record {
  margin-left: 12px;
  width: 12px;
  height: 12px;
  background: #4772b3;
  border-radius: 2px;
  display: flex;
  align-items: center;
  justify-content: center;
}

.tl-record i {
  width: 5px;
  height: 5px;
  background: #eee;
  border-radius: 50%;
}

.tl-recchev {
  margin-left: 4px;
}

.tl-transport {
  margin-left: 6px;
  width: 81px;
  height: 12px;
  background: #3c3c3c;
  border-radius: 3px;
  display: flex;
  align-items: center;
  justify-content: space-around;
}

.tl-transport svg {
  width: 8px;
  height: 8px;
}

.tl-frame {
  margin-left: 12px;
  width: 50px;
  height: 12px;
  background: #545454;
  border-radius: 3px;
  text-align: center;
  line-height: 12px;
  color: #ccc;
}

.tl-timer {
  margin-left: 5px;
  width: 12px;
  height: 12px;
  background: #3a3a3a;
  display: flex;
  align-items: center;
  justify-content: center;
  border-radius: 3px 0 0 3px;
}

.tl-start {
  width: 24px;
  height: 12px;
  background: #4a4a4a;
  line-height: 12px;
  padding-left: 10px;
  border-radius: 0 3px 3px 0;
  overflow: hidden;
  color: #ccc;
}

/* right hand editors */
.blender-right {
  width: 74px;
  display: flex;
  flex-direction: column;
  gap: 3px;
}

.outliner {
  height: 175px;
  background: #282828;
  border-radius: 4px;
  overflow: hidden;
  flex: none;
}

.out-header {
  height: 18px;
  background: #232323;
  display: flex;
  align-items: center;
  padding-left: 5px;
  gap: 4px;
  position: relative;
  z-index: 1;
}

.out-header .hbtn { width: 21px; }

.out-search {
  margin-left: 12px;
  color: #aaa;
}

.out-rows {
  margin-top: -5px;
}

.orow {
  height: 13.7px;
  display: flex;
  align-items: center;
  justify-content: flex-end;
  position: relative;
  padding-right: 7px;
  gap: 3px;
  color: #cfcfcf;
}

.orow > svg {
  width: 10px;
  height: 10px;
}

.orow > svg + svg {
  width: 11px;
  height: 11px;
}

.stem::before {
  content: "";
  position: absolute;
  left: 19px;
  top: 0;
  bottom: 0;
  width: 1px;
  background: #404040;
}

.tri {
  position: absolute;
  left: 17px;
  border-top: 5px solid #bbb;
  border-left: 2.5px solid transparent;
  border-right: 2.5px solid transparent;
}

.check {
  position: absolute;
  left: 30px;
  width: 8px;
  height: 8px;
  background: #d8d8d8;
  color: #222;
  border-radius: 1px;
  display: flex;
}

.check svg {
  width: 8px;
  height: 8px;
}

.properties {
  flex: 1;
  min-height: 0;
  background: #2b2b2b;
  border-radius: 4px;
  overflow: hidden;
  display: flex;
  flex-direction: column;
}

.prop-header {
  height: 18px;
  flex: none;
  background: #232323;
  display: flex;
  align-items: center;
  padding-left: 6px;
}

.prop-header .hbtn { width: 19px; }

.prop-search {
  margin-left: 13px;
  flex: 1;
  height: 12px;
  background: #2c2c2c;
  border-radius: 3px 0 0 3px;
  padding-left: 3px;
  color: #aaa;
  display: flex;
  align-items: center;
}

.prop-body {
  flex: 1;
  display: flex;
  min-height: 0;
}

.prop-tabs {
  width: 22px;
  flex: none;
  background: #1d1d1d;
  position: relative;
}

.prop-tabs svg {
  position: absolute;
  left: 4px;
  width: 12px;
  height: 12px;
}

/* positions follow the tab list, page y minus 459 */
.g-tool { top: 7px; }
.g-render { top: 32px; }
.g-output { top: 51px; }
.g-layer { top: 71px; }
.g-scene { top: 89px; }
.g-world { top: 108px; }
.g-coll { top: 133px; }
.g-obj { top: 158px; }
.g-mod { top: 177px; }
.g-part { top: 196px; }
.g-phys { top: 215px; }
.g-cons { top: 234px; }
.g-data { top: 253px; }
.g-mat { top: 272px; }
.g-tex { top: 297px; }

.prop-content {
  flex: 1;
  min-width: 0;
  padding: 0 3px 0 2px;
  overflow: hidden;
}

.prop-context {
  height: 24px;
  display: flex;
  align-items: center;
  gap: 4px;
  padding-left: 1px;
  color: #c0c0c0;
}

.prop-context span {
  margin-left: 2px;
}

.prop-context .ic11 {
  margin-left: auto;
  margin-right: 2px;
}

.panel {
  background: #373737;
  border-radius: 4px;
  margin-bottom: 2px;
  overflow: hidden;
}

.panel-format { height: 147px; }
.panel-frame { height: 85px; margin-bottom: 3px; }
.panel-stereo { height: 14px; margin-bottom: 4px; }
.panel-output { height: 72px; }

.panel-head {
  height: 19px;
  display: flex;
  align-items: center;
  gap: 3px;
  padding-left: 4px;
  color: #c4c4c4;
}

.panel-stereo .panel-head {
  height: 14px;
}

.grip-v {
  width: 3px;
  height: 8px;
  margin-right: -5px;
  background: repeating-linear-gradient(180deg, #888 0 1px, transparent 1px 2px);
}

.frow {
  height: 13px;
  display: flex;
  align-items: center;
  justify-content: flex-end;
  padding-right: 7px;
  gap: 5px;
}

.frow label {
  color: #bbb;
  font-size: 7.8px;
}

.field {
  width: 16px;
  height: 13px;
  background: #545454;
  display: block;
  border-bottom: 1px solid #4a4a4a;
}

.field.blue { background: #4772b3; }

.field.dark {
  background: #1f1f1f;
  border: 0;
  height: 12px;
  border-radius: 3px;
  display: flex;
  align-items: center;
  justify-content: center;
  color: #ccc;
}

.spaced { margin-top: 4px; }
.spaced-more { margin-top: 6px; }

.panel-format .panel-head { margin-bottom: 4px; }
.panel-frame .panel-head { margin-bottom: 4px; }

.crow {
  height: 14px;
  display: flex;
  align-items: center;
  justify-content: flex-end;
  padding-right: 16px;
  gap: 5px;
}

.crow label { color: #bbb; font-size: 7.8px; }

.cbox {
  width: 8px;
  height: 8px;
  background: #545454;
  border-radius: 1px;
  display: flex;
  flex: none;
  color: #fff;
}

.cbox.on { background: #4772b3; }

.cbox svg {
  width: 8px;
  height: 8px;
}

.subhead {
  margin-top: 9px;
  padding-left: 15px;
  display: flex;
  align-items: center;
  gap: 3px;
}

.path-row {
  display: flex;
  height: 12px;
  margin: 4px 7px 4px 6px;
  justify-content: flex-end;
}

.path-field {
  width: 22px;
  background: #1f1f1f;
  border-radius: 3px 0 0 3px;
  line-height: 12px;
  padding-left: 3px;
  overflow: hidden;
}

.path-btn {
  width: 12px;
  background: #545454;
  display: flex;
  align-items: center;
  justify-content: center;
}

.statusbar {
  height: 14px;
  flex: none;
  background: #1c1c1c;
  display: flex;
  align-items: center;
  font-size: 8px;
  color: #868686;
}

.st {
  display: flex;
  align-items: center;
  gap: 6px;
}

.st svg {
  width: 7px;
  height: 11px;
  color: #b0b0b0;
}

.st-a { margin-left: 9px; width: 167px; }
.st-b { width: 166px; }

/* atom */
.atom {
  width: 491px;
  margin-top: 1px;
  display: flex;
  flex-direction: column;
  background: #21252b;
  border-radius: 5px;
  overflow: hidden;
  position: relative;
}

.atom-title {
  height: 19px;
}

.atom-name {
  display: flex;
  align-items: center;
  gap: 4px;
  font-size: 9.2px;
  font-weight: 600;
  color: #b4b6b8;
}

.doc {
  width: 8px;
  height: 10px;
}

.atom-main {
  flex: 1;
  display: flex;
  min-height: 0;
  position: relative;
  border-top: 1px solid #191c20;
}

.tree {
  width: 84px;
  flex: none;
  background: #21252b;
  border-right: 1px solid #181a1f;
  font-size: 8.8px;
  color: #9da5b4;
}

.tree-tab {
  height: 20px;
  text-align: center;
  line-height: 18px;
  color: #b0b6c2;
}

.tree-row {
  height: 17px;
  display: flex;
  align-items: center;
}

.tree-dir {
  color: #6db587;
  padding-left: 4px;
  margin-top: 2px;
  gap: 2px;
}

.folder {
  width: 11px;
  height: 9px;
  margin-right: 2px;
}

.tree-file {
  background: #4a74c5;
  color: #eef2fa;
  padding-left: 26px;
  gap: 4px;
  margin-right: -1px;
}

.fileic {
  width: 9px;
  height: 11px;
}

.tree-handle {
  position: absolute;
  left: 83px;
  top: 260px;
  width: 17px;
  height: 34px;
  background: #21252b;
  border-radius: 0 17px 17px 0;
  display: flex;
  align-items: center;
  padding-left: 2px;
}

.tree-handle svg {
  width: 8px;
  height: 10px;
}

.editor {
  flex: 1;
  min-width: 0;
  display: flex;
  flex-direction: column;
  background: #282c34;
}

.tabs {
  height: 19px;
  flex: none;
  background: #21252b;
}

.tab {
  display: block;
  width: 179px;
  height: 19px;
  background: #282c34;
  text-align: center;
  line-height: 18px;
  font-size: 8.8px;
  font-style: italic;
  color: #b0b6c2;
}

.code {
  flex: 1;
  overflow: hidden;
  font-family: 'DejaVu Sans Mono', 'Liberation Mono', monospace;
  font-size: 9.5px;
  line-height: 14.33px;
  color: #9ea5b1;
}

.line {
  display: flex;
  height: 14.33px;
  white-space: pre;
}

.line.cur {
  background: #3a3f4b;
}

.ln {
  width: 21px;
  flex: none;
  text-align: right;
  color: #4b5263;
}

.line.cur .ln {
  color: #8b92a0;
}

.src {
  margin-left: 14px;
}

.k { color: #b56ccb; }
.s { color: #88b06c; }
.n { color: #c08d5d; }
.t { color: #4ea6b2; }
.f { color: #5a9fda; }
.c { color: #565d69; font-style: italic; }

.atom-status {
  height: 20px;
  flex: none;
  background: #21252b;
  border-top: 1px solid #181a1f;
  display: flex;
  align-items: center;
  padding: 0 7px 0 6px;
  font-size: 8.5px;
  color: #8d95a3;
}

.as-file { width: 41px; }
.as-pos { width: 25px; }

.as-right {
  margin-left: auto;
  display: flex;
  align-items: center;
  gap: 11px;
}

.as-icon {
  display: flex;
  align-items: center;
  gap: 3px;
}

.as-icon svg {
  width: 11px;
  height: 11px;
}

.as-git { gap: 2px; }
.as-git svg { width: 10px; }
```
